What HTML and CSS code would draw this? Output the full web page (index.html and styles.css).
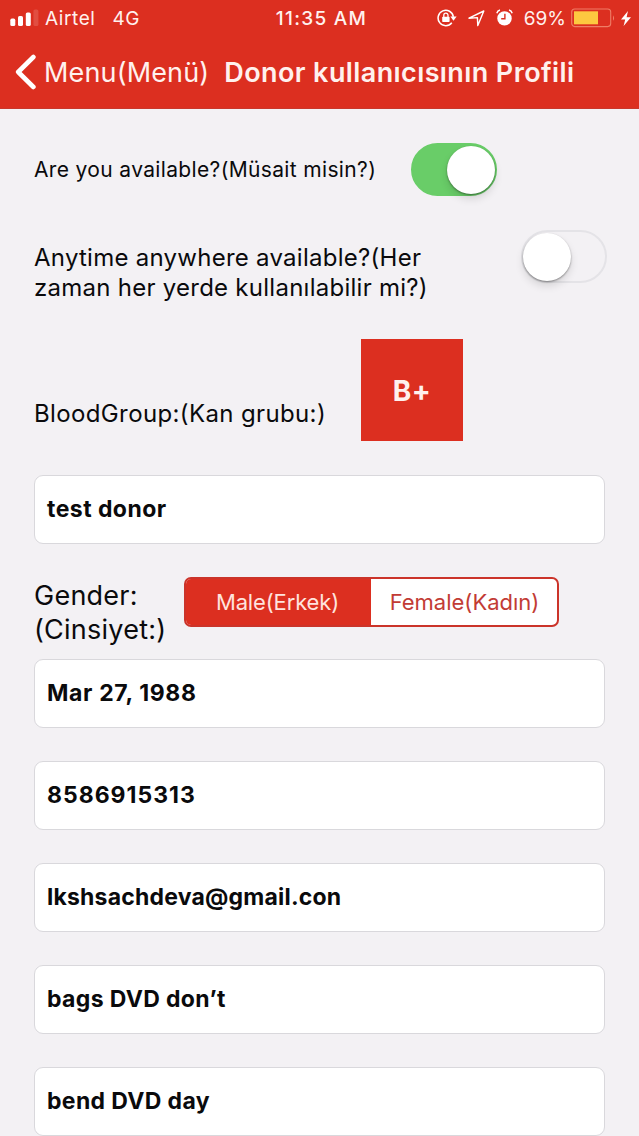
FILE: index.html
```
<!DOCTYPE html>
<html lang="tr">
<head>
  <meta charset="UTF-8" />
  <meta name="viewport" content="width=device-width, initial-scale=1.0" />
  <title>Donor Profili</title>
  <link rel="stylesheet" href="styles.css">
</head>
<body>
  <header>
    <div class="status-bar">
      <div class="status-left">
        <svg class="signal" width="29" height="18" viewBox="0 0 29 18" fill="#fff">
          <rect x="0.3" y="9.6" width="5" height="7.4" rx="1.6" />
          <rect x="8" y="7" width="5" height="10" rx="1.6" />
          <rect x="15.8" y="3.4" width="5" height="13.6" rx="1.6" />
          <rect x="23.4" y="0.4" width="5" height="16.6" rx="1.6" opacity="0.15" />
        </svg>
        <span class="carrier">Airtel</span>
        <span class="network">4G</span>
      </div>
      <span class="time">11:35 AM</span>
      <div class="status-right">
        <svg class="lock-icon" width="20" height="18" viewBox="0 0 20 18" fill="none" stroke="#fff" stroke-width="1.5">
          <path d="M14.8 13.8A7.7 7.7 0 1 1 16.4 7.8" />
          <path d="M13.4 7.6h6.2l-3.1 4.2z" fill="#fff" stroke="none" />
          <rect x="5.2" y="7.8" width="7.4" height="5.2" rx="0.8" fill="#fff" stroke="none" />
          <path d="M6.8 8V6.3a2.1 2.1 0 0 1 4.2 0V8" stroke-width="1.3" />
        </svg>
        <svg class="location-icon" width="17" height="17" viewBox="0 0 17 17" fill="none" stroke="#fff" stroke-width="1.4" stroke-linejoin="round">
          <path d="M1 8.2L15.8 1 9.8 15.6 9.4 7.6z" />
        </svg>
        <svg class="alarm-icon" width="17" height="18" viewBox="0 0 17 18" fill="none" stroke="#fff">
          <circle cx="8.5" cy="9.4" r="7.2" fill="#fff" stroke="none" />
          <path d="M0.8 4.2A4.5 4.5 0 0 1 4 1M13 1a4.5 4.5 0 0 1 3.2 3.2" stroke-width="1.4" />
          <path d="M8.9 4.8v5H5.2" stroke="#dc2f20" stroke-width="1.4" />
        </svg>
        <span class="percent">69%</span>
        <svg class="battery" width="45" height="20" viewBox="0 0 45 20" fill="none">
          <rect x="0.7" y="1" width="39" height="17.6" rx="3" stroke="#ef7d66" stroke-width="1.1" />
          <rect x="3" y="3.3" width="24" height="13" fill="#fdc840" />
          <path d="M42 7.2q2.2 2.8 0 5.6z" fill="#ef7d66" />
        </svg>
        <svg class="bolt" width="10" height="15" viewBox="0 0 10 15" fill="#fff">
          <path d="M7 0L0 8.4h4.2L2.6 15 10 6.2H5.6z" />
        </svg>
      </div>
    </div>
    <nav>
      <a class="back">
        <svg width="21" height="36" viewBox="0 0 21 36" fill="none" stroke="#fff" stroke-width="4.6" stroke-linecap="round" stroke-linejoin="round">
          <path d="M18.4 3L3.2 18l15.2 15" />
        </svg>
        <span>Menu(Menü)</span>
      </a>
      <h1>Donor kullanıcısının Profili</h1>
    </nav>
  </header>

  <main>
    <div class="row available">
      <label>Are you available?(Müsait misin?)</label>
      <div class="switch on"></div>
    </div>
    <div class="row anytime">
      <label>Anytime anywhere available?(Her<br>zaman her yerde kullanılabilir mi?)</label>
      <div class="switch"></div>
    </div>
    <div class="row blood">
      <label>BloodGroup:(Kan grubu:)</label>
      <div class="blood-group">B+</div>
    </div>

    <div class="field name">test donor</div>

    <div class="row gender">
      <label>Gender:<br>(Cinsiyet:)</label>
      <div class="segment">
        <div class="option male">Male(Erkek)</div>
        <div class="option female">Female(Kadın)</div>
      </div>
    </div>

    <div class="fields">
      <div class="field date">Mar 27, 1988</div>
      <div class="field phone">8586915313</div>
      <div class="field email">lkshsachdeva@gmail.con</div>
      <div class="field address">bags DVD don’t</div>
      <div class="field city">bend DVD day</div>
    </div>
  </main>
</body>
</html>
```
FILE: styles.css
```
* {
  box-sizing: border-box;
}
html {
  overflow: hidden;
}
body {
  margin: 0;
  height: 1136px;
  overflow: hidden;
  font-family: Inter, "Liberation Sans", sans-serif;
  background: #f3f1f4;
  color: #0a0a0c;
}
header {
  height: 109px;
  background: #dc2f20;
  color: #fff1ee;
  border-bottom: 1px solid #c9382c;
}
.status-bar {
  display: grid;
  grid-template-columns: 1fr auto 1fr;
  align-items: center;
  height: 36px;
  padding: 0 8px 0 10px;
  font-size: 19px;
}
.status-left,
.status-right {
  display: flex;
  align-items: center;
}
.status-right {
  justify-content: flex-end;
}
.carrier {
  margin-left: 6px;
  letter-spacing: 0.6px;
}
.network {
  margin-left: 17px;
  letter-spacing: 0.5px;
}
.time {
  padding-left: 2px;
  font-weight: 500;
  letter-spacing: 1.3px;
}
.location-icon {
  margin-left: 12px;
}
.alarm-icon {
  margin-left: 11px;
}
.lock-icon {
  margin-right: -1px;
}
.percent {
  margin: 0 5px 0 11px;
}
.bolt {
  margin-left: 5px;
}
nav {
  display: flex;
  align-items: center;
  height: 72px;
  padding-left: 15px;
}
.back {
  display: flex;
  align-items: center;
  gap: 8px;
  font-size: 27px;
  letter-spacing: 0.15px;
}
h1 {
  margin: 0 0 0 15px;
  font-size: 27px;
  font-weight: 600;
  letter-spacing: 0.4px;
}
main {
  padding: 34px 34px 0;
}
.row {
  display: flex;
}
.available {
  height: 87px;
  font-size: 21px;
  letter-spacing: 0.35px;
}
.available label {
  width: 377px;
  line-height: 54px;
}
.switch {
  flex: none;
  width: 86px;
  height: 53px;
  border: 2px solid #e4e3e7;
  border-radius: 27px;
}
.switch::before {
  content: "";
  display: block;
  width: 48px;
  height: 48px;
  margin-top: 1px;
  border-radius: 50%;
  background: #fff;
  box-shadow: 0 1px 2px rgba(0,0,0,0.4), 0 5px 8px rgba(0,0,0,0.12);
}
.switch.on {
  background: #69cd68;
  border-color: #69cd68;
}
.switch.on::before {
  margin-left: 34px;
}
.anytime {
  height: 109px;
  font-size: 24px;
  letter-spacing: 0.26px;
}
.anytime label {
  flex: none;
  width: 487px;
  padding-top: 13px;
  line-height: 30px;
}
.blood {
  height: 136px;
  font-size: 24px;
  letter-spacing: 0.37px;
}
.blood label {
  width: 327px;
  padding-top: 60px;
  line-height: 30px;
}
.blood-group {
  width: 102px;
  height: 102px;
  background: #dc2f20;
  color: #fff1ee;
  font-size: 28px;
  font-weight: 700;
  line-height: 104px;
  text-align: center;
}
.field {
  height: 69px;
  padding-left: 12px;
  border: 1px solid #d9d8dc;
  border-radius: 9px;
  background: #fff;
  font-size: 23px;
  font-weight: 700;
  line-height: 66px;
}
.name {
  letter-spacing: 0.45px;
}
.date {
  letter-spacing: 0.65px;
}
.phone {
  letter-spacing: 1px;
}
.email {
  letter-spacing: 0.2px;
}
.address,
.city {
  letter-spacing: 0.35px;
}
.gender {
  height: 115px;
  padding-top: 33px;
}
.gender label {
  width: 150px;
  padding-top: 2px;
  font-size: 27px;
  letter-spacing: 0.25px;
  line-height: 34px;
}
.segment {
  display: flex;
  width: 375px;
  height: 50px;
  border: 2px solid #cb342a;
  border-radius: 7px;
  background: #fff;
  overflow: hidden;
  font-size: 22px;
  line-height: 46px;
  text-align: center;
}
.male {
  width: 185px;
  padding-right: 2px;
  background: #dc2f20;
  color: #ffe3de;
  letter-spacing: -0.15px;
}
.female {
  width: 186px;
  padding-left: 1px;
  color: #c23b35;
}
.fields {
  display: flex;
  flex-direction: column;
  gap: 33px;
}
```
